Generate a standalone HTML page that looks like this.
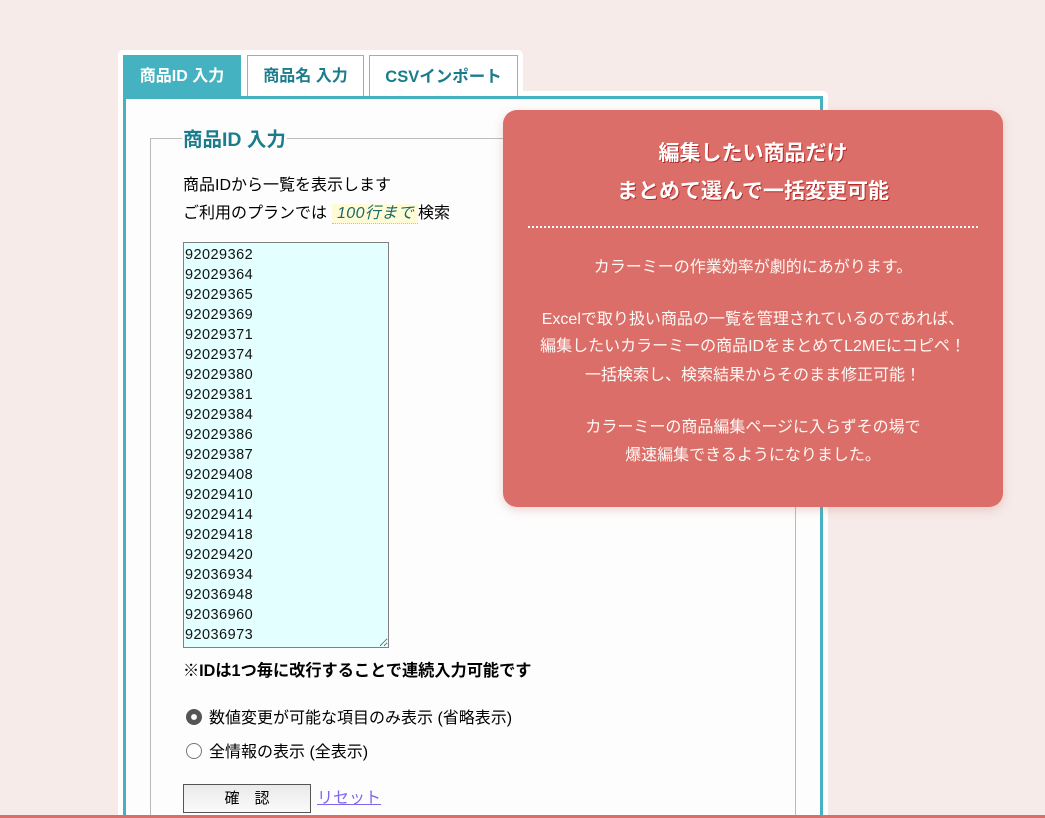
<!DOCTYPE html>
<html lang="ja"><head><meta charset="utf-8"><title>商品ID 入力</title>
<style>
*{box-sizing:border-box}
html,body{margin:0;padding:0}
body{width:1045px;height:818px;overflow:hidden;position:relative;background:#f6ebe9;font-family:"Liberation Sans","Noto Sans CJK JP",sans-serif;color:#000}
.a{position:absolute;white-space:nowrap}
.tab{position:absolute;top:55px;height:41px;background:#fff;border:1px solid #aaa;border-bottom:0;color:#1b7c8c;font-weight:bold;font-size:16px;line-height:42px;text-align:center}
.t{font-size:16px;line-height:20px}
.card p{position:absolute;left:0;width:500px;margin:0;text-align:center;color:#fff;white-space:nowrap}
.h{font-size:21px;font-weight:bold;line-height:30px;text-shadow:1px 1px 0 #b32a2a}
.b{font-size:16px;line-height:24px;color:#fff8f4!important}
input[type=radio]{appearance:none;-webkit-appearance:none;border-radius:50%;border:1px solid #767676;background:#fff}
input[type=radio]:checked{border:0;background:radial-gradient(circle,#fff 0,#fff 2.6px,#555 3.2px)}
</style></head><body>
<div class="a" style="left:118px;top:50px;width:405px;height:60px;background:#fff;border-radius:5px 5px 0 0"></div>
<div class="a" style="left:118px;top:91px;width:710px;height:727px;background:#fff;border-radius:5px 5px 0 0"></div>
<div class="tab" style="left:123px;width:118px;background:#45b2c2;border:0;color:#fff;line-height:44px">商品ID 入力</div>
<div class="tab" style="left:247px;width:117px">商品名 入力</div>
<div class="tab" style="left:369px;width:149px;font-size:16.5px">CSVインポート</div>
<div class="a" style="left:123px;top:96px;width:700px;height:722px;background:#fdfdfd;border:3px solid #45b2c2;border-bottom:0"></div>
<div class="a" style="left:150px;top:138px;width:646px;height:680px;border:1px solid #bbb;border-bottom:0"></div>
<div class="a" style="left:182px;top:127px;padding:0 1px;background:#fdfdfd;color:#1b7c8c;font-weight:bold;font-size:19.5px;line-height:26px">商品ID 入力</div>
<div class="a t" style="left:183px;top:176px">商品IDから一覧を表示します</div>
<div class="a t" style="left:183px;top:204px">ご利用のプランでは</div>
<div class="a t" style="left:332px;top:204px;width:86px;height:20px;padding:0 0 0 5px;background:#fffbd6;border-bottom:1px dotted #f2b860;font-style:italic;color:#1b6a6a;letter-spacing:.4px">100行まで</div>
<div class="a t" style="left:418px;top:204px">検索</div>
<textarea class="a" readonly style="left:183px;top:242px;width:206px;height:406px;margin:0;padding:2px 1px;border:1px solid #808080;background:#e4ffff;color:#111;font:14.5px/20px 'Liberation Sans',sans-serif;letter-spacing:.45px;overflow:hidden;outline:0">92029362
92029364
92029365
92029369
92029371
92029374
92029380
92029381
92029384
92029386
92029387
92029408
92029410
92029414
92029418
92029420
92036934
92036948
92036960
92036973</textarea>
<div class="a" style="left:183px;top:660px;font-size:16.2px;line-height:22px;font-weight:bold">※IDは1つ毎に改行することで連続入力可能です</div>
<input class="a" type="radio" name="r" checked style="left:186px;top:709px;width:16px;height:16px;margin:0">
<div class="a t" style="left:209px;top:709px">数値変更が可能な項目のみ表示 (省略表示)</div>
<input class="a" type="radio" name="r" style="left:186px;top:743px;width:16px;height:16px;margin:0">
<div class="a t" style="left:209px;top:743px">全情報の表示 (全表示)</div>
<button class="a" type="button" style="left:183px;top:784px;width:128px;height:29px;margin:0;padding:0;border:1px solid #555;background:linear-gradient(#eaeaea,#fafafa);font:15px/25px 'Liberation Sans','Noto Sans CJK JP',sans-serif;color:#000">確　認</button>
<a class="a" href="#" style="left:317px;top:788px;font-size:16px;line-height:22px;color:#7b68ee;text-decoration:underline">リセット</a>
<div class="card a" style="left:503px;top:110px;width:500px;height:397px;background:#db6e68;border-radius:14px;box-shadow:0 3px 10px rgba(190,90,85,.25)">
<p class="h" style="top:29px">編集したい商品だけ</p>
<p class="h" style="top:67px">まとめて選んで一括変更可能</p>
<div class="a" style="left:25px;top:116px;width:450px;border-top:2px dotted #fff"></div>
<p class="b" style="top:146px">カラーミーの作業効率が劇的にあがります。</p>
<p class="b" style="top:198px">Excelで取り扱い商品の一覧を管理されているのであれば、</p>
<p class="b" style="top:225px">編集したいカラーミーの商品IDをまとめてL2MEにコピペ！</p>
<p class="b" style="top:254px">一括検索し、検索結果からそのまま修正可能！</p>
<p class="b" style="top:306px">カラーミーの商品編集ページに入らずその場で</p>
<p class="b" style="top:334px">爆速編集できるようになりました。</p>
</div>
<div class="a" style="left:0;top:815px;width:1045px;height:3px;background:#db6e68"></div>
</body></html>
